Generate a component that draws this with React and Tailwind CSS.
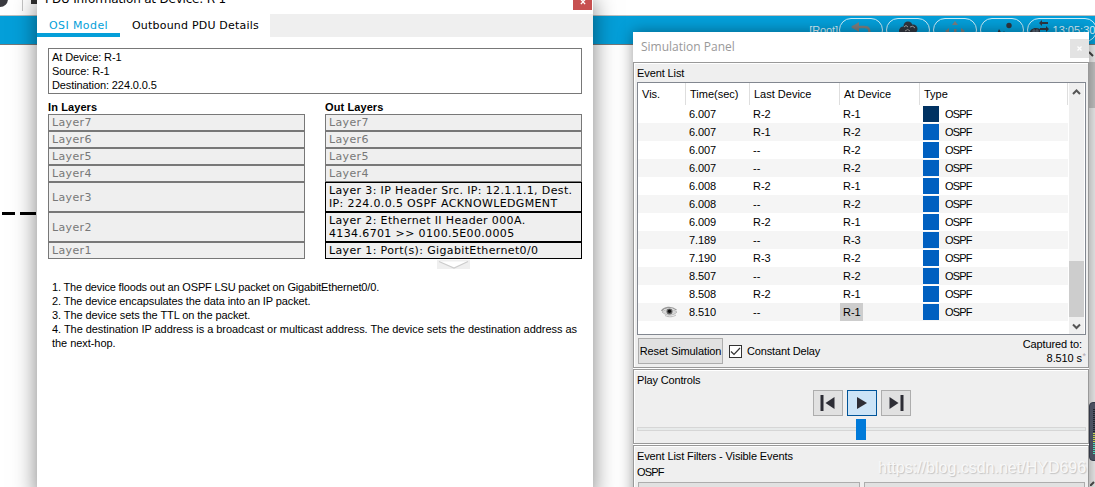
import React, { useState } from "react";

const events = [
  { time: "6.007", last: "R-2", at: "R-1", dark: true },
  { time: "6.007", last: "R-1", at: "R-2" },
  { time: "6.007", last: "--", at: "R-2" },
  { time: "6.007", last: "--", at: "R-2" },
  { time: "6.008", last: "R-2", at: "R-1" },
  { time: "6.008", last: "--", at: "R-2" },
  { time: "6.009", last: "R-2", at: "R-1" },
  { time: "7.189", last: "--", at: "R-3" },
  { time: "7.190", last: "R-3", at: "R-2" },
  { time: "8.507", last: "--", at: "R-2" },
  { time: "8.508", last: "R-2", at: "R-1" },
  { time: "8.510", last: "--", at: "R-1", current: true },
];

const inLayers = [
  { lines: ["Layer7"] },
  { lines: ["Layer6"] },
  { lines: ["Layer5"] },
  { lines: ["Layer4"] },
  { lines: ["Layer3"], tall: true },
  { lines: ["Layer2"], tall: true },
  { lines: ["Layer1"] },
];

const outLayers = [
  { lines: ["Layer7"] },
  { lines: ["Layer6"] },
  { lines: ["Layer5"] },
  { lines: ["Layer4"] },
  {
    lines: ["Layer 3: IP Header Src. IP: 12.1.1.1, Dest.", "IP: 224.0.0.5 OSPF ACKNOWLEDGMENT"],
    tall: true,
    active: true,
  },
  {
    lines: ["Layer 2: Ethernet II Header 000A.", "4134.6701 >> 0100.5E00.0005"],
    tall: true,
    active: true,
  },
  { lines: ["Layer 1: Port(s): GigabitEthernet0/0"], active: true },
];

const LayerColumn = ({ title, layers }) => (
  <div className="w-[257px]">
    <h3 className="h-[14px] text-[11px] font-bold leading-[14px] tracking-[0.1px]">{title}</h3>
    {layers.map((layer) => (
      <div
        key={layer.lines[0]}
        className={`flex flex-col justify-center border bg-[#efefef] pl-[3px] font-['DejaVu_Sans',sans-serif] text-[11px] leading-[13px] tracking-[0.36px] whitespace-nowrap ${
          layer.tall ? "h-[30px]" : "h-[17px]"
        } ${layer.active ? "border-black text-black" : "border-[#787878] text-[#787878]"}`}
      >
        {layer.lines.map((line) => (
          <span key={line}>{line}</span>
        ))}
      </div>
    ))}
  </div>
);

const PduWindow = () => (
  <div className="absolute top-0 left-[37px] h-[500px] w-[556px] bg-white shadow-[0_0_22px_rgba(0,0,0,0.5)]">
    <div className="flex h-[14px] items-end justify-between overflow-hidden">
      <span className="mb-[7px] ml-[8px] font-['DejaVu_Sans',sans-serif] text-[12px] leading-[16px] tracking-[-0.2px]">
        PDU Information at Device: R-1
      </span>
      <span className="mr-[1px] mb-[4px] flex h-[18px] w-[19px] items-center justify-center bg-[#c75050] text-white">
        <svg width="6" height="6" viewBox="0 0 7 7" className="mt-[1px]" stroke="currentColor" strokeWidth="1.6">
          <path d="M1 0.5L6 6M6 0.5L1 6" />
        </svg>
      </span>
    </div>
    <div className="flex h-[23px] bg-[#efefef] font-['DejaVu_Sans',sans-serif] text-[11px] leading-[15px]">
      <div className="flex w-[83px] flex-col justify-between bg-white tracking-[0.4px] text-[#049fd9]">
        <span className="mt-[4px] ml-[12px] whitespace-nowrap">OSI Model</span>
        <span className="h-[5px] bg-[#049fd9]" />
      </div>
      <div className="w-[150px] bg-white pt-[4px] pl-[12px] tracking-[0.2px] whitespace-nowrap">Outbound PDU Details</div>
    </div>
    <div className="mx-[11px] mt-[11px] h-[46px] border border-[#787878] pt-[1px] pl-[3px] text-[11px] leading-[14px]">
      <p className="tracking-[-0.1px]">At Device: R-1</p>
      <p className="tracking-[-0.1px]">Source: R-1</p>
      <p className="tracking-[-0.1px]">Destination: 224.0.0.5</p>
    </div>
    <div className="mx-[11px] mt-[6px] flex justify-between">
      <LayerColumn title="In Layers" layers={inLayers} />
      <LayerColumn title="Out Layers" layers={outLayers} />
    </div>
    <svg width="33" height="9" viewBox="0 0 33 9" className="mt-[1px] ml-[400px]">
      <rect width="33" height="9" fill="#efefef" />
      <path d="M2 1.500H31L17 8Z" fill="#fff" />
      <path d="M2 1.500L17 8L31 1.500" fill="none" stroke="#cdcdcd" strokeWidth="1.200" />
    </svg>
    <div className="mt-[11px] ml-[15px] text-[11px] leading-[14px] whitespace-nowrap">
      <p className="tracking-[-0.165px]">1. The device floods out an OSPF LSU packet on GigabitEthernet0/0.</p>
      <p className="tracking-[-0.11px]">2. The device encapsulates the data into an IP packet.</p>
      <p className="tracking-[-0.08px]">3. The device sets the TTL on the packet.</p>
      <p className="tracking-[-0.048px]">
        4. The destination IP address is a broadcast or multicast address. The device sets the destination address as
      </p>
      <p className="tracking-[-0.05px]">the next-hop.</p>
    </div>
  </div>
);

const EyeIcon = () => (
  <svg width="17" height="12" viewBox="0 0 17 12" className="ml-[23px]">
    <path d="M0.5 5C3 1 10 0 15.5 4" fill="none" stroke="#999" strokeWidth="1.3" />
    <path d="M1 6C5 2.500 11 2.500 16 6C12 10.500 5 10 1 6Z" fill="#d8d8d8" stroke="#aaa" strokeWidth="0.7" />
    <circle cx="8.500" cy="5.500" r="3" fill="#666" />
    <circle cx="8.500" cy="5.300" r="1.700" fill="#111" />
    <path d="M4 9.500C8 11.500 12 11 15 9" fill="none" stroke="#bbb" />
  </svg>
);

const Chevron = ({ down }) => (
  <svg width="9" height="8" viewBox="0 0 9 8" fill="none" stroke="#555" strokeWidth="2">
    <path d={down ? "M1 2.500L4.500 6L8 2.500" : "M1 6L4.500 2.500L8 6"} />
  </svg>
);

const headerCell = "border-r border-[#dedede] pt-[4px] leading-[14px]";

const EventTable = () => (
  <div className="ml-[3px] flex h-[253px] w-[449px] border border-[#828790] bg-white">
    <div className="w-[430px]">
      <div className="flex h-[22px]">
        <span className={`w-[48px] pl-[4px] ${headerCell}`}>Vis.</span>
        <span className={`w-[64px] pl-[4px] ${headerCell}`}>Time(sec)</span>
        <span className={`w-[90px] pl-[4px] ${headerCell}`}>Last Device</span>
        <span className={`w-[80px] pl-[4px] ${headerCell}`}>At Device</span>
        <span className={`w-[148px] pl-[4px] ${headerCell}`}>Type</span>
      </div>
      {events.map((event, i) => (
        <div key={i} className={`flex h-[18px] w-[430px] items-center leading-[18px] ${i % 2 ? "bg-[#f5f5f5]" : "bg-white"}`}>
          <span className="w-[51px]">{event.current && <EyeIcon />}</span>
          <span className="w-[64px] tracking-[-0.1px]">{event.time}</span>
          <span className="w-[87px]">{event.last}</span>
          <span className={`h-[18px] w-[23px] pl-[3px] ${event.current ? "bg-[#cdcdcd]" : ""}`}>{event.at}</span>
          <span className={`ml-[60px] h-4 w-4 ${event.dark ? "bg-[#003262]" : "bg-[#0060c0]"}`} />
          <span className="ml-[6px] tracking-[-0.8px]">OSPF</span>
        </div>
      ))}
    </div>
    <div className="ml-[1px] flex w-[15px] flex-col items-center bg-[#efefef]">
      <div className="flex h-[17px] items-center">
        <Chevron />
      </div>
      <div className="mt-[161px] h-[56px] w-[15px] bg-[#cdcdcd]" />
      <div className="flex h-[17px] items-center">
        <Chevron down />
      </div>
    </div>
  </div>
);

const ControlButton = ({ active, label, children, onClick }) => (
  <button
    onClick={onClick}
    aria-label={label}
    className={`flex h-[26px] w-[30px] items-center justify-center border text-[#2d2d35] ${
      active ? "border-[#005499] bg-[#cce4f7]" : "border-[#adadad] bg-[#e1e1e1]"
    }`}
  >
    <svg width="18" height="18" viewBox="0 0 18 18" fill="currentColor">
      {children}
    </svg>
  </button>
);

const groupClass = "border border-[#999] bg-[#efefef] shadow-[inset_0_1px_0_#fff,inset_1px_0_0_#fff]";

const SimulationPanel = () => {
  const [constantDelay, setConstantDelay] = useState(true);
  const [playing, setPlaying] = useState(true);

  return (
    <div className="absolute top-[32px] left-[633px] h-[480px] w-[456px] bg-white text-[11px] leading-[14px] shadow-[0_0_14px_rgba(0,0,0,0.4)]">
      <div className="flex h-[30px] justify-between">
        <span className="mt-[6px] ml-[8px] font-['Open_Sans',sans-serif] text-[12px] leading-[18px] text-[#999]">
          Simulation Panel
        </span>
        <span className="mt-[7px] flex h-[19px] w-[19px] items-center justify-center bg-[#e3e3e3] text-white">
          <svg width="5" height="5" viewBox="0 0 5 5" stroke="currentColor" strokeWidth="1.3">
            <path d="M0.500 0.500L4.500 4.500M4.500 0.500L0.500 4.500" />
          </svg>
        </span>
      </div>

      <section className={`h-[306px] ${groupClass}`}>
        <h2 className="mb-[2px] ml-[3px] pt-[3px] leading-[14px] tracking-[-0.1px]">Event List</h2>
        <EventTable />
        <div className="mt-[3px] flex h-[26px] items-center">
          <button className="ml-[4px] h-[26px] w-[85px] border border-[#adadad] bg-[#e1e1e1] tracking-[-0.1px] whitespace-nowrap">
            Reset Simulation
          </button>
          <label className="ml-[6px] flex items-center tracking-[-0.15px]">
            <span
              onClick={() => setConstantDelay(!constantDelay)}
              className="mr-[5px] flex h-[13px] w-[13px] items-center justify-center border border-[#333] bg-white"
            >
              {constantDelay && (
                <svg width="11" height="9" viewBox="0 0 11 9" fill="none" stroke="#333" strokeWidth="1.200">
                  <path d="M1 4.500L4 7.500L10 1" />
                </svg>
              )}
            </span>
            Constant Delay
          </label>
          <div className="mr-[2px] ml-auto flex items-center text-right">
            <p className="tracking-[-0.1px]">
              Captured to:
              <br />
              8.510 s
            </p>
            <span className="mt-[10px] w-[4px] text-[9px] leading-[9px] text-[#b0a8b0]">*</span>
          </div>
        </div>
      </section>

      <section className={`mt-[1px] h-[75px] ${groupClass}`}>
        <h2 className="ml-[3px] pt-[3px] tracking-[-0.15px]">Play Controls</h2>
        <div className="mt-[3px] ml-[179px] flex gap-1">
          <ControlButton label="Back">
            <rect x="1.500" y="1" width="3" height="16" />
            <path d="M15.500 3V15L6.500 9Z" />
          </ControlButton>
          <ControlButton label="Play" active={playing} onClick={() => setPlaying(!playing)}>
            <path d="M4 3V15L14 9Z" />
          </ControlButton>
          <ControlButton label="Forward">
            <path d="M2.500 3V15L11.500 9Z" />
            <rect x="13.500" y="1" width="3" height="16" />
          </ControlButton>
        </div>
        <div className="mt-[3px] ml-[3px] flex h-[21px] w-[449px] items-center">
          <span className="mb-[1px] h-[4px] w-[219px] border border-r-0 border-[#d6d6d6] bg-[#e7eaea]" />
          <span className="h-[21px] w-[10px] bg-[#007ad9]" />
          <span className="mb-[1px] h-[4px] flex-1 border border-l-0 border-[#d6d6d6] bg-[#e7eaea]" />
        </div>
      </section>

      <section className={`mt-[1px] h-[80px] ${groupClass}`}>
        <h2 className="ml-[3px] pt-[3px] tracking-[-0.12px]">Event List Filters - Visible Events</h2>
        <p className="mt-[2px] ml-[3px] tracking-[-0.8px]">OSPF</p>
        <div className="mt-[3px] ml-[4px] flex gap-1">
          <span className="h-[26px] w-[222px] border border-[#adadad] bg-[#e1e1e1]" />
          <span className="h-[26px] w-[221px] border border-[#adadad] bg-[#e1e1e1]" />
        </div>
      </section>
    </div>
  );
};

const Pill = ({ children, className }) => (
  <span className={`flex h-[24px] justify-center rounded-full border border-[#cdeefa] ${className}`}>{children}</span>
);

const NavBar = () => (
  <div className="flex h-[30px] items-start justify-end overflow-hidden border-t border-b border-t-[#bfbfbf] border-b-[#777] bg-[#049fd9] pt-[2px] font-['Liberation_Sans',Arial,sans-serif] text-[11px] leading-[14px] text-[#d9f1fb]">
    <span className="mt-[5px] mr-[1px] tracking-[-0.1px]">[Root]</span>
    <div className="flex gap-[3px]">
      <Pill className="w-[44px]">
        <svg width="22" height="22" viewBox="0 0 22 22" className="mt-[2px]">
          <path d="M2 6H14C19 6 19.500 8 19.500 13" fill="none" stroke="#7d7d7d" strokeWidth="2.500" />
          <path d="M1 6L9 1V11Z" fill="#7d7d7d" />
        </svg>
      </Pill>
      <Pill className="w-[44px]">
        <svg width="20" height="18" viewBox="0 0 20 18" className="mt-[2px]" fill="#2f3640">
          <circle cx="10" cy="5" r="4.500" />
          <circle cx="5.500" cy="10" r="4.500" />
          <circle cx="15" cy="8" r="4.500" />
          <circle cx="11" cy="11" r="5" />
          <path d="M6 6Q8 3 10 6M12 6Q15 4 17 7M7 10Q10 7 12 10" stroke="#a4a4a4" fill="none" />
        </svg>
      </Pill>
      <Pill className="w-[44px]">
        <svg width="20" height="20" viewBox="0 0 20 20" className="mt-[2px]" fill="#7d7d7d">
          <path d="M10 0L13 4H7ZM0 10L4 7V13ZM20 10L16 7V13ZM10 20L7 16H13Z" />
          <rect x="9" y="8" width="2.500" height="4" />
        </svg>
      </Pill>
      <Pill className="w-[44px]">
        <svg width="18" height="18" viewBox="0 0 18 18" className="mt-[2px] ml-[4px]" fill="#2f3640">
          <circle cx="14" cy="4.500" r="2.700" />
          <path d="M1 15L4 8L7 13L9 10L12 15Z" />
        </svg>
      </Pill>
      <Pill className="mr-[-2px] w-[70px]">
        <svg width="20" height="18" viewBox="0 0 20 18" className="mt-[1px]" fill="#2f3640">
          <path d="M10 3L13 0V2H19V4H13V6ZM20 9L17 6V8H11V10H17V12Z" />
          <path d="M0 15C1 8 6 7 11 9V15Z" />
          <path d="M3 11H10M2 13H10M5 9V14M8 9V14" stroke="#7892a5" strokeWidth="0.600" />
        </svg>
        <span className="mt-[4px] ml-[4px]">13:05:30</span>
      </Pill>
    </div>
  </div>
);

export default function App() {
  return (
    <div className="relative h-[487px] w-[1095px] overflow-hidden bg-white font-['Liberation_Sans',Arial,sans-serif] text-black">
      <div className="flex h-[15px] items-start">
        <span className="-mt-[9px] -ml-[9px] h-[16px] w-[17px] rounded-full bg-[#3a3a3f]" />
        <span className="ml-[14px] h-[11px] w-px bg-[#c4c4c4]" />
        <span className="ml-[8px] h-[4px] w-[10px] bg-[#333]" />
      </div>
      <NavBar />
      <div className="flex h-[442px] justify-between">
        <div className="flex gap-[5px] pt-[167px] pl-[2px]">
          <span className="h-[3px] w-[13px] bg-black" />
          <span className="h-[3px] w-[16px] bg-black" />
        </div>
        <div className="w-[6px] bg-[#efefef]">
          <div className="flex h-[17px] items-center">
            <svg width="6" height="6" viewBox="0 0 6 6" fill="none" stroke="#444" strokeWidth="2">
              <path d="M0 1L4 5" />
            </svg>
          </div>
          <div className="h-[46px] bg-[#c4c4c4]" />
        </div>
      </div>

      <PduWindow />
      <SimulationPanel />

      {/* traffic meter docked at the screen edge */}
      <div className="absolute top-[402px] left-[1089px] flex h-[59px] w-[12px] flex-col rounded-[4px] border border-[#333846] bg-[#4b5060] pt-[6px] pl-[3px]">
        <span className="h-[24px] bg-[repeating-linear-gradient(#20242c_0_1px,#4b5060_1px_2px)]" />
        <span className="h-[10px] bg-[repeating-linear-gradient(#c5d94d_0_1px,#4b5060_1px_2px)]" />
        <span className="h-[12px] bg-[repeating-linear-gradient(#4ce0b8_0_1px,#4b5060_1px_2px)]" />
      </div>
      <svg className="absolute top-[481px] left-[1090px]" width="5" height="5" viewBox="0 0 5 5" stroke="#444" strokeWidth="2">
        <path d="M0 5L4 1" />
      </svg>
      <div className="absolute top-[459px] left-[878px] text-[16px] leading-[18px] whitespace-nowrap text-[#f8f8f8] [text-shadow:1px_1px_1px_#c4c4c4]">
        https://blog.csdn.net/HYD696
      </div>
    </div>
  );
}
